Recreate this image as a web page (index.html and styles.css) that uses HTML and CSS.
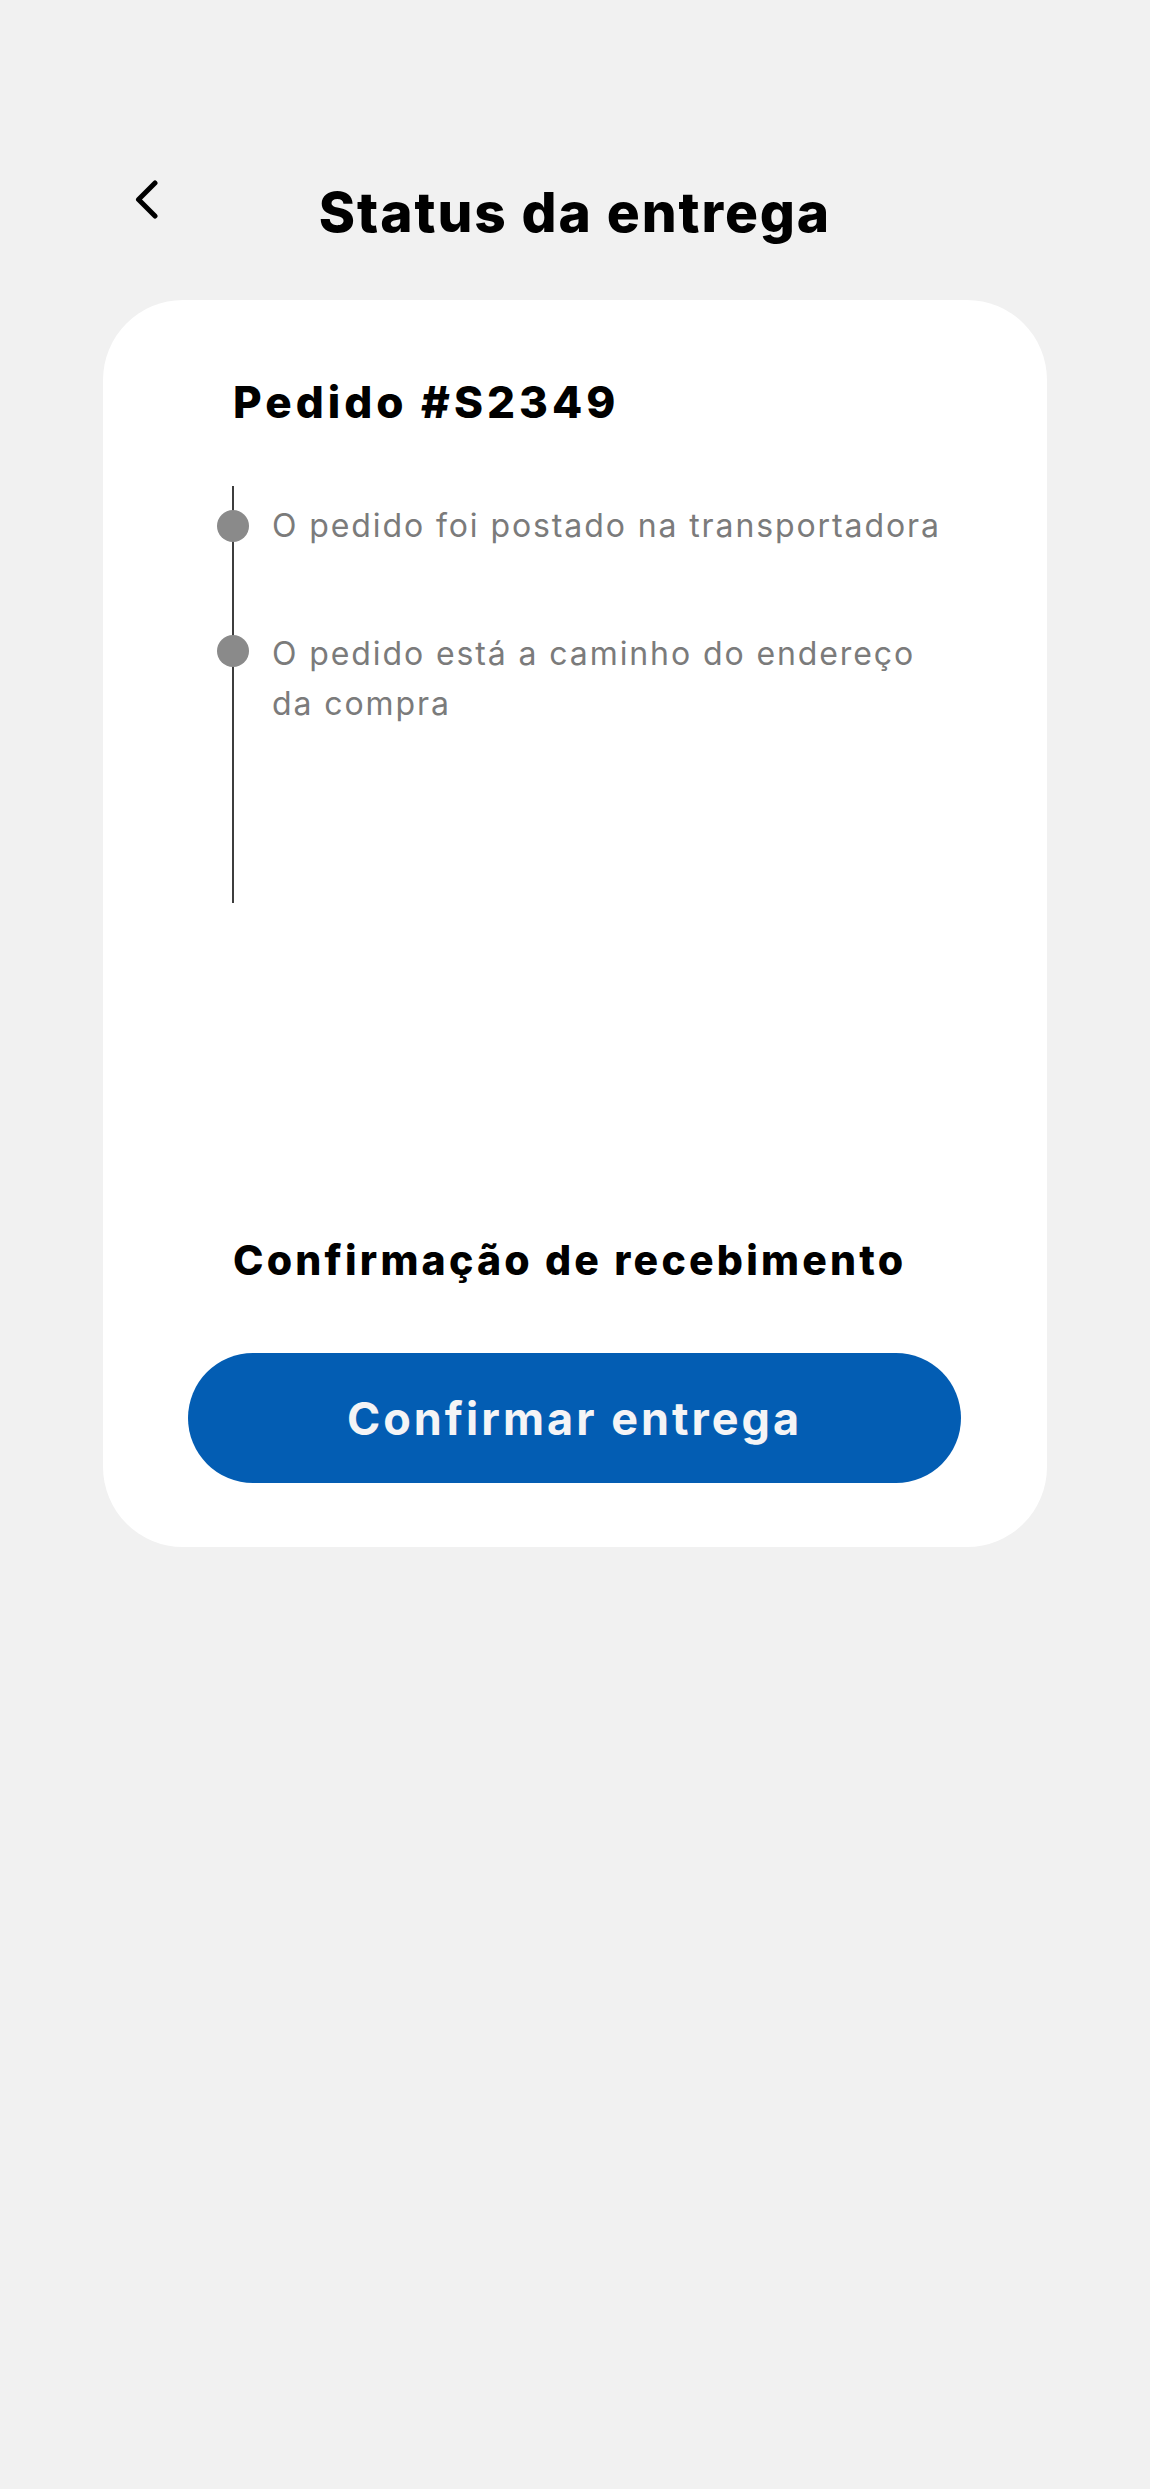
FILE: index.html
```html
<!DOCTYPE html>
<html lang="pt-BR">
<head>
<meta charset="utf-8">
<title>Status da entrega</title>
<link rel="stylesheet" href="styles.css">
</head>
<body>
<div class="screen">
  <header class="header">
    <button class="back" aria-label="Voltar">
      <svg width="24" height="40" viewBox="0 0 24 40"><path d="M20 3 L3.5 19.5 L20 36" fill="none" stroke="#000" stroke-width="5" stroke-linecap="round" stroke-linejoin="round"/></svg>
    </button>
    <h1 class="title">Status da entrega</h1>
    <div></div>
  </header>

  <main class="card">
    <h2 class="order">Pedido #S2349</h2>
    <ul class="timeline">
      <li class="step">
        <span class="dot"></span>
        <span class="step-text">O pedido foi postado na transportadora</span>
      </li>
      <li class="step step-second">
        <span class="dot"></span>
        <span class="step-text">O pedido está a caminho do endereço da compra</span>
      </li>
    </ul>
    <h3 class="section">Confirmação de recebimento</h3>
    <button class="confirm">Confirmar entrega</button>
  </main>
</div>
</body>
</html>
```

FILE: styles.css
```css
* { box-sizing: border-box; }
html, body {
  margin: 0;
  padding: 0;
  background: #f1f1f1;
  font-family: Inter, "Noto Sans", "Liberation Sans", sans-serif;
}
.screen {
  width: 1150px;
  min-height: 2489px;
}
.header {
  height: 300px;
  padding-top: 180px;
  display: grid;
  grid-template-columns: 1fr auto 1fr;
  align-items: start;
}
.back {
  justify-self: start;
  margin-left: 135px;
  padding: 0;
  border: 0;
  background: none;
  width: 24px;
  height: 40px;
  display: block;
}
.back svg { display: block; }
.title {
  margin: 5px 0 0;
  font-size: 55px;
  line-height: 1;
  font-weight: 800;
  color: #000;
  letter-spacing: 1.9px;
}
.card {
  margin: 0 103px;
  background: #fff;
  border-radius: 80px;
  padding: 80px 86px 64px 85px;
  display: flex;
  flex-direction: column;
}
.order {
  margin: 0 0 0 45px;
  font-size: 44px;
  line-height: 1;
  font-weight: 800;
  color: #000;
  letter-spacing: 4px;
}
.timeline {
  list-style: none;
  margin: 62px 0 0 44px;
  padding: 15px 0 0 0;
  height: 417px;
  border-left: 2px solid #3d3d3d;
}
.step {
  display: flex;
  align-items: flex-start;
}
.step-second { margin-top: 78px; }
.dot {
  flex: none;
  width: 32px;
  height: 32px;
  border-radius: 50%;
  background: #8a8a8a;
  margin-left: -17px;
  margin-top: 9px;
}
.step-second .dot { margin-top: 6px; }
.step-text {
  margin-left: 23px;
  max-width: 685px;
  font-size: 32px;
  line-height: 50px;
  font-weight: 400;
  color: #7b7b7b;
  letter-spacing: 1.9px;
}
.section {
  margin: 337px 0 0 45px;
  font-size: 41px;
  line-height: 1;
  font-weight: 800;
  color: #000;
  letter-spacing: 3.2px;
}
.confirm {
  margin-top: 72px;
  height: 130px;
  border: 0;
  border-radius: 65px;
  background: #035db3;
  color: #f4f4f6;
  font-family: inherit;
  font-size: 45px;
  font-weight: 700;
  letter-spacing: 3px;
  cursor: pointer;
}
```
